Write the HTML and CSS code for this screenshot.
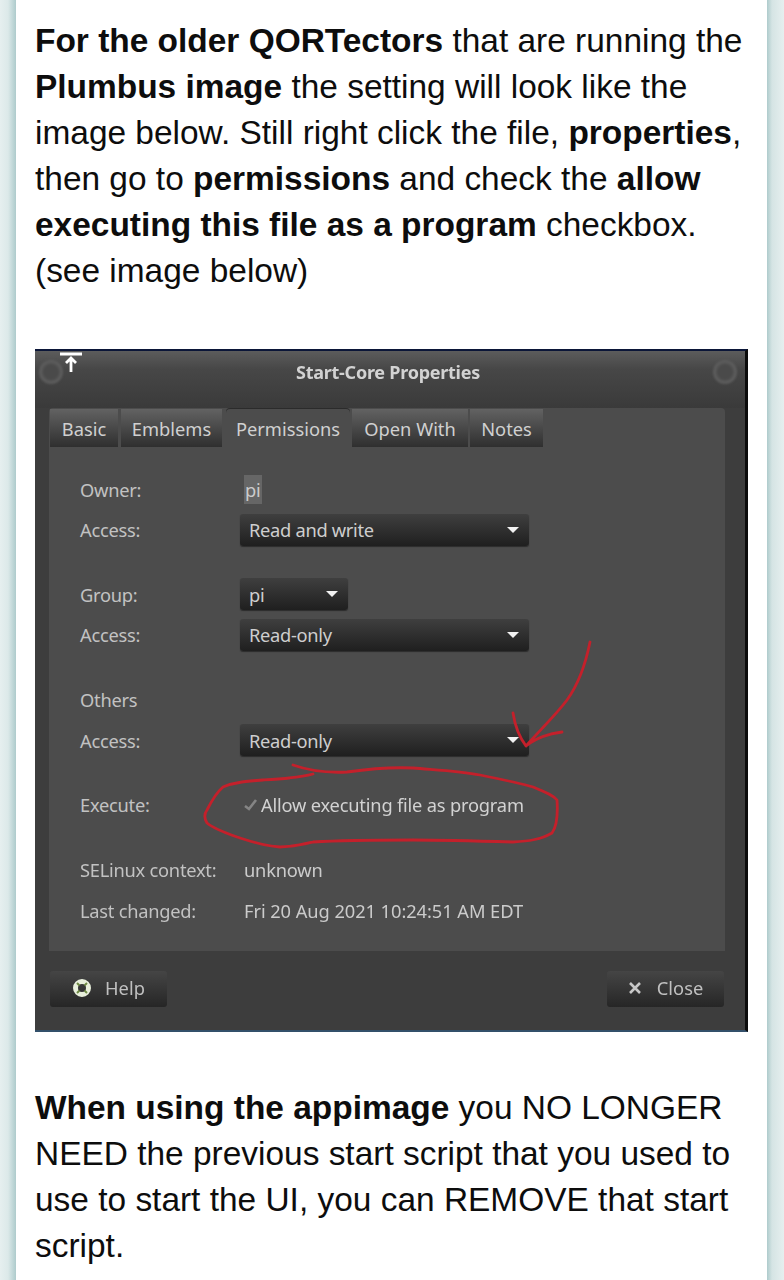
FILE: index.html
```html
<!DOCTYPE html>
<html lang="en">
<head>
<meta charset="utf-8">
<title>QORTector instructions</title>
<link rel="stylesheet" href="styles.css">
</head>
<body>
<main class="card">
  <p class="para"><b>For the older QORTectors</b> that are running the <b>Plumbus image</b> the setting will look like the image below. Still right click the file, <b>properties</b>, then go to <b>permissions</b> and check the <b>allow executing this file as a program</b> checkbox. (see image below)</p>

  <section class="window">
    <header class="titlebar">
      <span class="knob"></span>
      <svg class="pin" viewBox="0 0 24 24" width="24" height="24"><path d="M1 3h22M12 21V8M7 12l5-5 5 5" fill="none" stroke="#fff" stroke-width="2.8"/></svg>
      <h1 class="title">Start-Core Properties</h1>
      <span class="knob"></span>
    </header>

    <div class="notebook">
      <nav class="tabs">
        <span class="tab tab-basic">Basic</span>
        <span class="tab tab-emblems">Emblems</span>
        <span class="tab tab-active">Permissions</span>
        <span class="tab tab-open">Open With</span>
        <span class="tab tab-notes">Notes</span>
      </nav>
      <div class="form">
        <div class="group">
          <div class="row"><span class="label">Owner:</span><span class="value"><span class="selected">pi</span></span></div>
          <div class="row"><span class="label">Access:</span><span class="select">Read and write<i class="caret"></i></span></div>
        </div>
        <div class="group">
          <div class="row"><span class="label">Group:</span><span class="select select-small">pi<i class="caret"></i></span></div>
          <div class="row"><span class="label">Access:</span><span class="select">Read-only<i class="caret"></i></span></div>
        </div>
        <div class="group">
          <div class="row"><span class="label">Others</span></div>
          <div class="row"><span class="label">Access:</span><span class="select">Read-only<i class="caret"></i></span></div>
        </div>
        <div class="group">
          <div class="row"><span class="label">Execute:</span><span class="value check-line"><svg class="check" viewBox="0 0 14 12" width="14" height="12"><path d="M1 7l4 3 7-9" fill="none" stroke="#858585" stroke-width="2.6"/></svg>Allow executing file as program</span></div>
        </div>
        <div class="group">
          <div class="row"><span class="label">SELinux context:</span><span class="value">unknown</span></div>
          <div class="row"><span class="label">Last changed:</span><span class="value value-date">Fri 20 Aug 2021 10:24:51 AM EDT</span></div>
        </div>
      </div>
    </div>

    <footer class="actions">
      <span class="button">
        <svg viewBox="0 0 20 20" width="20" height="20"><circle cx="10" cy="10" r="6.5" fill="none" stroke="#e8efdc" stroke-width="5"/><path d="M5 5l2.5 2.5M15 5l-2.5 2.5M5 15l2.5-2.5M15 15l-2.5-2.5" stroke="#6f8a45" stroke-width="2"/></svg>
        Help
      </span>
      <span class="button button-close">
        <svg viewBox="0 0 14 14" width="14" height="14"><path d="M2 2l10 10M12 2L2 12" stroke="#c8c8c8" stroke-width="2.6" fill="none"/></svg>
        Close
      </span>
    </footer>

    <svg class="scribble" viewBox="35 349 713 683" aria-hidden="true">
      <path d="M590 642C586 662 580 682 567 700C555 716 538 732 526 746C520 738 515 726 513 713M526 746C536 738 546 734 562 732" />
      <path d="M293 765C310 771 328 773 347 772C368 769 392 767 413 768C436 770 460 771 480 775C500 779 520 783 533 787C545 792 553 795 557 800C558 815 557 826 552 833C540 840 528 841 513 842C480 841 446 840 413 840C380 840 346 840 313 842C300 845 292 847 280 847C265 846 252 842 240 838C226 833 214 829 207 823C204 818 204 814 207 810C212 800 216 793 223 787C235 782 248 781 263 780C280 779 298 778 313 774" />
    </svg>
  </section>

  <p class="para para-last"><b>When using the appimage</b> you NO LONGER NEED the previous start script that you used to use to start the UI, you can REMOVE that start script.</p>
</main>
</body>
</html>
```

FILE: styles.css
```css
html, body {
  margin: 0;
  height: 1280px;
  overflow: hidden;
}

body {
  background: linear-gradient(90deg, #e6efef 0, #dce9e9 8px, #aecbcc 16px, #fff 16px, #fff 767px, #aecbcc 767px, #d5e4e4 772px, #e6efef 784px);
  font-family: "Liberation Sans", Arial, sans-serif;
  color: #0d0d0d;
}

.card {
  box-sizing: border-box;
  margin: 0 17px 0 16px;
  padding: 18px 19px 0 19px;
}

.para {
  margin: 0;
  font-size: 33.45px;
  line-height: 46px;
}

.para b {
  font-weight: 700;
}

.para-last {
  margin-top: 53px;
  width: 712px;
}

.window {
  position: relative;
  box-sizing: border-box;
  width: 713px;
  height: 683px;
  margin-top: 55px;
  padding: 0 20px 0 14px;
  display: flex;
  flex-direction: column;
  background: #3d3d3d;
  border-top: 2px solid #0b1638;
  border-bottom: 2px solid #33506a;
  border-right: 3px solid #0c0c0c;
  font-family: "Noto Sans", "Open Sans", sans-serif;
  font-size: 18.3px;
  color: #cfcfcf;
}

.titlebar {
  box-sizing: border-box;
  height: 57px;
  margin: 0 -20px 0 -14px;
  padding: 0 8px 16px 4px;
  display: flex;
  align-items: center;
  background: linear-gradient(#5c5c5c 0, #474747 18px, #3a3a3a 57px);
  position: relative;
  filter: blur(0.4px);
}

.knob {
  width: 24px;
  height: 24px;
  border-radius: 50%;
  background: radial-gradient(circle, #4a4a4a 0 42%, #5f5f5f 62%, #4a4a4a 100%);
  filter: blur(1px);
}

.pin {
  position: absolute;
  left: 24px;
  top: 0;
}

.title {
  flex: 1;
  margin: 0;
  text-align: center;
  font-size: 18px;
  font-weight: 700;
  color: #d2d2d2;
  letter-spacing: -0.25px;
}

.notebook {
  height: 543px;
  background: #4c4c4c;
  border-radius: 4px 4px 0 0;
  filter: blur(0.4px);
}

.tabs {
  display: flex;
  height: 39px;
  padding: 1px 0 0 1px;
  gap: 2px;
}

.tab {
  display: flex;
  align-items: center;
  justify-content: center;
  box-sizing: border-box;
  height: 38px;
  background: linear-gradient(#626262, #2f2f2f);
  color: #d0d0d0;
}

.tab-basic { width: 68px; margin-right: 1px; }
.tab-emblems { width: 101px; margin-right: 2px; }
.tab-active { width: 124px; background: #4c4c4c; border-radius: 4px 4px 0 0; box-shadow: 0 -1px 0 #2b2b2b; }
.tab-open { width: 116px; }
.tab-notes { width: 73px; }

.form {
  padding: 25px 0 0 31px;
  display: flex;
  flex-direction: column;
  gap: 32.8px;
}

.group {
  display: flex;
  flex-direction: column;
  gap: 8.5px;
}

.row {
  height: 32px;
  display: flex;
  align-items: center;
}

.label {
  width: 160px;
  color: #c2c2c2;
  white-space: nowrap;
  letter-spacing: -0.25px;
}

.value {
  padding-left: 4px;
  color: #cbcbcb;
  white-space: nowrap;
  letter-spacing: -0.2px;
}

.value-date {
  letter-spacing: -0.07px;
}

.selected {
  background: #666;
  padding: 2px 1px;
}

.check-line {
  display: flex;
  align-items: center;
  gap: 3px;
  margin-left: -4px;
  color: #d2d2d2;
}

.check {
  margin-left: 4px;
}

.select {
  box-sizing: border-box;
  width: 289px;
  height: 32px;
  padding: 0 9px;
  display: flex;
  align-items: center;
  justify-content: space-between;
  border-radius: 3px;
  background: linear-gradient(#3f3f3f, #1f1f1f);
  box-shadow: 0 1px 1px #2c2c2c;
  color: #cecece;
  white-space: nowrap;
  letter-spacing: -0.3px;
}

.select-small {
  width: 108px;
}

.caret {
  width: 0;
  height: 0;
  margin-right: 1px;
  border-left: 6px solid transparent;
  border-right: 6px solid transparent;
  border-top: 6px solid #f2f2f2;
}

.actions {
  display: flex;
  justify-content: space-between;
  padding-top: 20px;
  padding-left: 1px;
  padding-right: 1px;
  filter: blur(0.4px);
}

.button {
  box-sizing: border-box;
  width: 117px;
  height: 36px;
  padding-bottom: 3px;
  display: flex;
  align-items: center;
  justify-content: center;
  gap: 13px;
  border-radius: 3px;
  background: linear-gradient(#454545, #262626);
  color: #c0c0c0;
}

.button-close {
  gap: 15px;
}

.scribble {
  position: absolute;
  left: 0;
  top: -2px;
  width: 713px;
  height: 683px;
  fill: none;
  stroke: #c4202b;
  stroke-width: 2.8;
  stroke-linecap: round;
  stroke-linejoin: round;
}
```
